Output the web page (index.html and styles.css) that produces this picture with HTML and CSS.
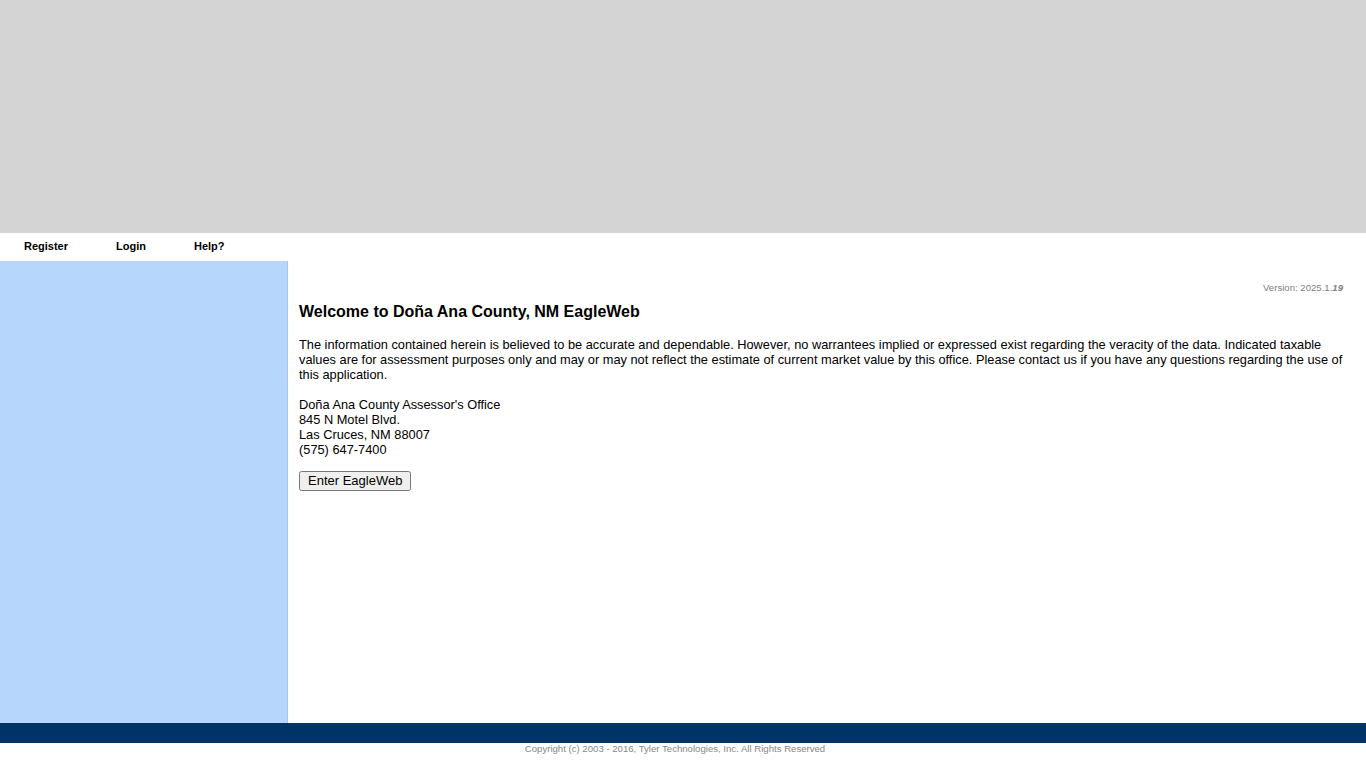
FILE: index.html
```html
<!DOCTYPE html>
<html lang="en">
<head>
  <meta charset="UTF-8">
  <title>EagleWeb</title>
  <link rel="stylesheet" href="styles.css">
</head>
<body>

  <div class="banner"></div>

  <div class="menu">
    <a href="#" class="menu-register">Register</a>
    <a href="#" class="menu-login">Login</a>
    <a href="#" class="menu-help">Help?</a>
  </div>

  <div class="middle">
    <div class="sidebar"></div>

    <div class="content">
      <div class="version">Version: 2025.1.<b><i>19</i></b></div>

      <h1>Welcome to Doña Ana County, NM EagleWeb</h1>

      <p>The information contained herein is believed to be accurate and dependable. However, no warrantees implied or expressed exist regarding the veracity of the data. Indicated taxable values are for assessment purposes only and may or may not reflect the estimate of current market value by this office. Please contact us if you have any questions regarding the use of this application.</p>

      <p class="address">Doña Ana County Assessor's Office<br>
      845 N Motel Blvd.<br>
      Las Cruces, NM 88007<br>
      (575) 647-7400</p>

      <button type="button">Enter EagleWeb</button>
    </div>
  </div>

  <div class="footer-bar"></div>
  <div class="copyright">Copyright (c) 2003 - 2016, Tyler Technologies, Inc. All Rights Reserved</div>

</body>
</html>
```

FILE: styles.css
```css
body {
  margin: 0;
  font-family: "Liberation Sans", Arial, sans-serif;
  font-size: 12.8px;
  color: #000;
  background-color: #fff;
}

.banner {
  height: 233px;
  background-color: #d4d4d4;
}

.menu {
  height: 28px;
  display: flex;
  align-items: center;
  padding-bottom: 2px;
  box-sizing: border-box;
}

.menu a {
  font-size: 11px;
  font-weight: bold;
  color: #000;
  text-decoration: none;
}

.menu-register {
  margin-left: 24px;
}

.menu-login {
  margin-left: 48px;
}

.menu-help {
  margin-left: 48px;
}

.middle {
  display: flex;
  height: 462px;
}

.sidebar {
  width: 287px;
  background-color: #b6d6fc;
  border-right: 1px solid #a9c7ec;
}

.content {
  flex: 1;
  padding: 20px 23px 0 11px;
}

.version {
  text-align: right;
  font-size: 9.6px;
  color: #7f7f7f;
  margin-bottom: 10px;
  padding-top: 1px;
}

h1 {
  font-size: 16px;
  font-weight: bold;
  margin: 0 0 16px;
}

p {
  margin: 0 0 15px;
  line-height: 15px;
}

.address {
  margin-bottom: 14px;
}

button {
  font-family: "Liberation Sans", Arial, sans-serif;
  font-size: 13px;
  padding: 0 7px 2px;
  height: 20px;
}

.footer-bar {
  height: 20px;
  background-color: #003366;
}

.copyright {
  text-align: center;
  font-size: 9.6px;
  color: #888;
  padding-right: 16px;
}
```
